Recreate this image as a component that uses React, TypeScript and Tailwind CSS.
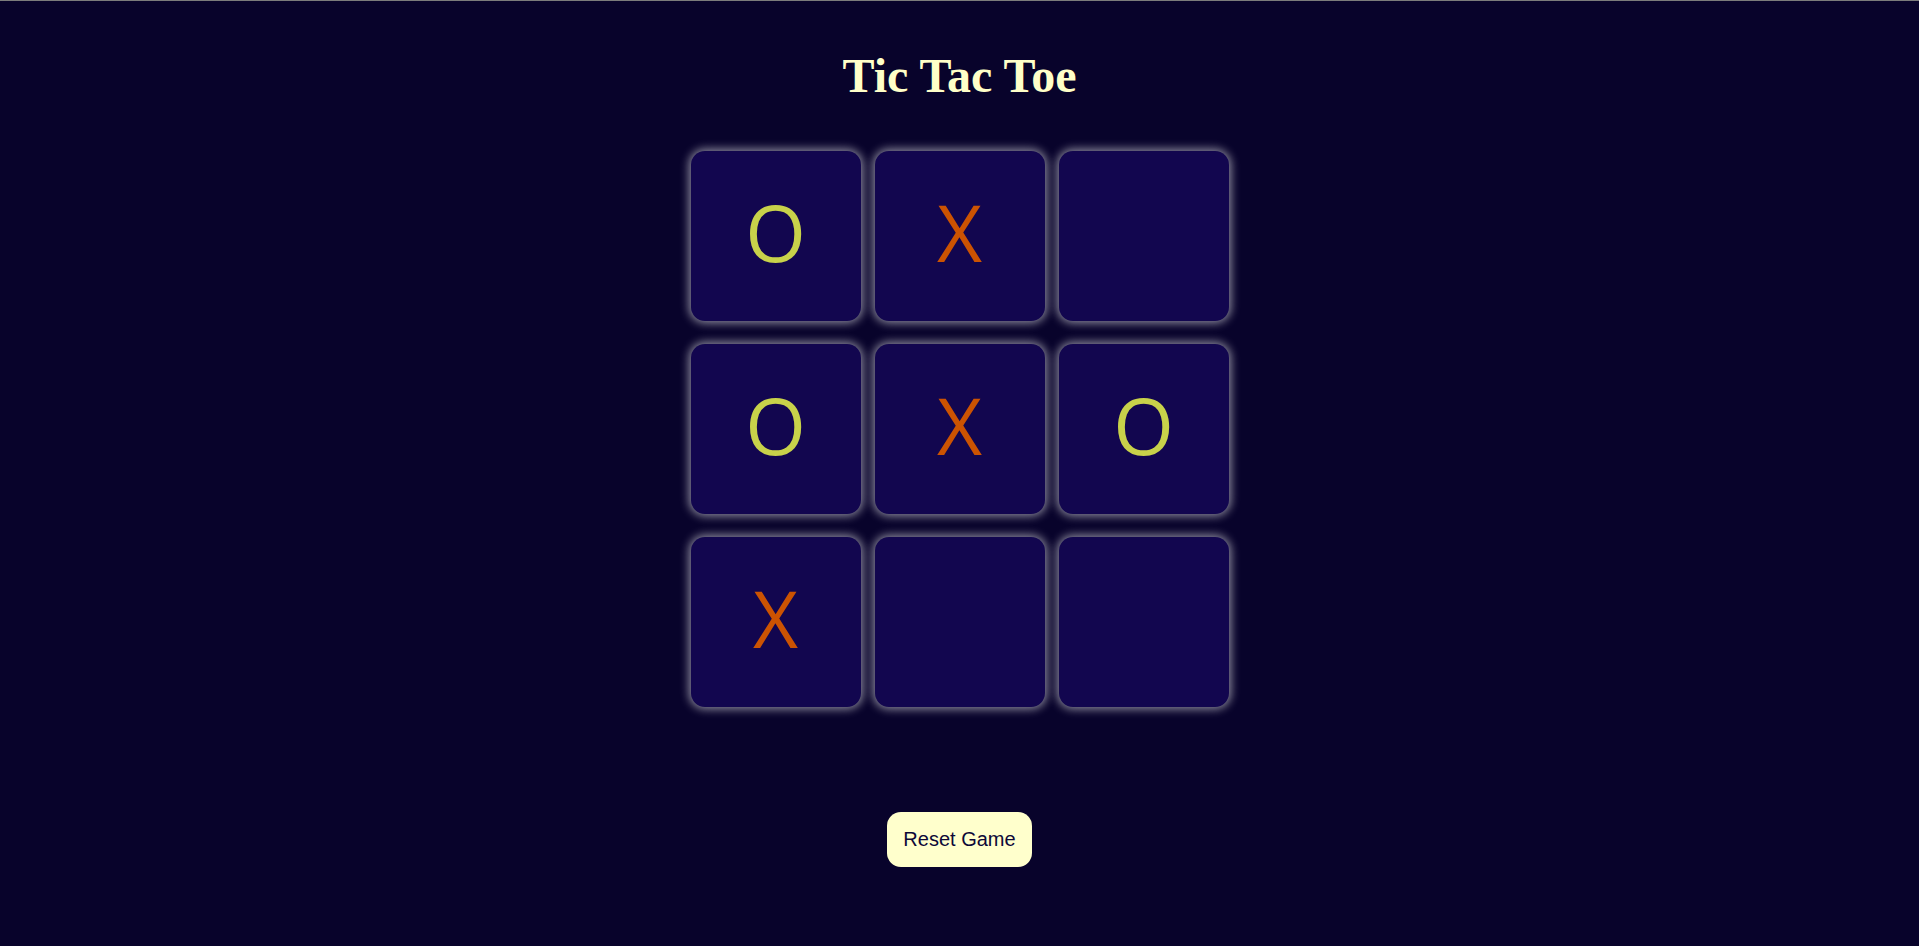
const board: (string | null)[] = ["O", "X", null, "O", "X", "O", "X", null, null];

export default function App() {
  return (
    <div className="flex min-h-[946px] flex-col items-center border-t border-[#7c7c7c] bg-[#08032b]">
      <h1 className="mt-[51px] font-['Liberation_Serif',serif] text-[48px] font-bold leading-none text-[#ffffc8]">
        Tic Tac Toe
      </h1>

      <div className="mt-[51px] grid grid-cols-[repeat(3,170px)] gap-x-[14px] gap-y-[23px]">
        {board.map((v, i) => (
          <div
            key={i}
            className="flex h-[170px] w-[170px] items-center justify-center rounded-[14px] bg-[#12064f] shadow-[0_0_10px_2px_rgba(255,255,255,0.55)]"
          >
            {v && (
              <span
                className={`pb-2 font-['Open_Sans',sans-serif] text-[78px] leading-none ${
                  v === "O" ? "text-[#c8d24a]" : "text-[#cc5302]"
                }`}
              >
                {v}
              </span>
            )}
          </div>
        ))}
      </div>

      <button className="mt-[105px] rounded-[14px] bg-[#ffffcc] px-4 py-4 font-['Liberation_Sans',Arial,sans-serif] text-[20px] leading-[23px] text-[#0d0838]">
        Reset Game
      </button>
    </div>
  );
}
